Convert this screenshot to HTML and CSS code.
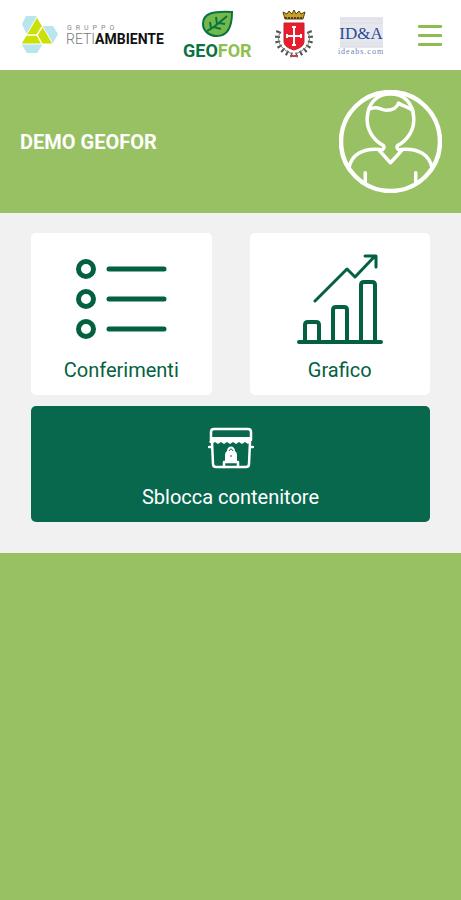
FILE: index.html
```html
<!DOCTYPE html>
<html lang="it">
<head>
  <meta charset="UTF-8" />
  <meta name="viewport" content="width=device-width, initial-scale=1.0"/>
  <title>Geofor</title>
  <link rel="stylesheet" href="styles.css">
</head>
<body>
  <header class="topbar">
    <svg class="logo-reti" viewBox="0 0 142 50" role="img" aria-label="Gruppo Retiambiente">
      <g fill="#b9e5ec">
        <path d="M6 6h10l5 8-5 9H6l-4-9z"/>
        <path d="M23 16h10l5 8-5 9H23l-5-9z"/>
        <path d="M7 27h10l5 8-5 8H7l-5-8z"/>
      </g>
      <path d="M17 7l16 27H1z" fill="#cbe004" stroke="#fff"/>
      <path d="M5 25h12l5 9M17 25l5-8" fill="none" stroke="#fff" stroke-width="1.5"/>
      <text class="gruppo" x="47" y="20">GRUPPO</text>
      <text class="reti" x="46" y="34">RETI<tspan class="ambiente">AMBIENTE</tspan></text>
    </svg>
    <svg class="logo-geofor" viewBox="0 0 72 50" role="img" aria-label="Geofor">
      <path d="M50 2c0 15-4 24-15 24-8 0-14-5-14-12C21 3 31 1 50 2z" fill="#75b84a" stroke="#087443" stroke-width="2"/>
      <path d="M25 21C32 18 38 12 45 6M29 18l-1-6M35 14l-1-7M32 17l7 2M37 13l6 1" fill="none" stroke="#087443" stroke-width="2"/>
      <text class="geo" x="1" y="47">GEO<tspan class="for">FOR</tspan></text>
    </svg>
    <svg class="logo-crest" viewBox="0 0 40 50" role="img" aria-label="Stemma del comune">
      <path d="M11 9L9 2l4 2 2-3 3 3 2-4 2 4 3-3 2 3 4-2-2 7z" fill="#c99f25" stroke="#514016"/>
      <path d="M11 8h18" stroke="#514016" stroke-width="2" stroke-dasharray="2 1"/>
      <path d="M5 21c-5 13 3 21 13 24M35 21c5 13-3 21-13 24" fill="none" stroke="#4b5a50" stroke-width="5" stroke-dasharray="2 3"/>
      <path d="M6 22c-5 12 4 19 13 22M34 22c5 12-4 19-13 22" fill="none" stroke="#777" stroke-width="1"/>
      <path d="M10 13h20v18c0 5-4 7-10 9-6-2-10-4-10-9z" fill="#e81e2d" stroke="#c3202b"/>
      <path d="M20 18v17M13 26h14M18 17h4M18 35h4M13 24v4M27 24v4" fill="none" stroke="#fff" stroke-width="2"/>
      <path d="M16 46h8" stroke="#b54a4a" stroke-width="2"/>
    </svg>
    <svg class="logo-ida" viewBox="0 0 54 50" role="img" aria-label="ID&amp;A ideabs.com">
      <path d="M6 7h43v31H6z" fill="#e6e7ec"/>
      <path d="M6 9h43M6 13h43M6 33h43M6 36h43" stroke="#dcdde6"/>
      <text class="ida" x="27" y="29" text-anchor="middle">ID&amp;A</text>
      <text class="ida-url" x="27" y="44" text-anchor="middle">ideabs.com</text>
    </svg>
    <button class="menu-btn" type="button" aria-label="Menu">
      <span></span>
      <span></span>
      <span></span>
    </button>
  </header>

  <section class="profile">
    <h1>DEMO GEOFOR</h1>
    <svg class="avatar" viewBox="0 0 102 102" aria-hidden="true">
      <g fill="none" stroke="#fff" stroke-width="3.5" stroke-linecap="round" stroke-linejoin="round">
        <circle cx="51" cy="51" r="49" stroke-width="4.5"/>
        <path d="M41 60q5-2 3-5C33 49 27 38 28 27 29 12 38 4 51 4s22 8 23 23c1 11-5 22-16 28q-2 3 3 5"/>
        <path d="M40 60l11 12 11-12"/>
        <path d="M30 19c8-4 11 1 17 1 7 0 10-2 12-7 4 3 8 3 14 7"/>
        <path d="M41 59C23 57 12 65 10 77M61 59c18-2 29 6 31 18"/>
        <path d="M26 82v11M76 82v11"/>
      </g>
    </svg>
  </section>

  <!-- Main actions -->
  <main class="actions">
    <button class="card" type="button">
      <svg class="card-icon" viewBox="0 0 92 92" aria-hidden="true">
        <g fill="none" stroke="#04613f" stroke-width="5" stroke-linecap="round">
          <circle cx="11" cy="16" r="7.5"/>
          <circle cx="11" cy="46" r="7.5"/>
          <circle cx="11" cy="76" r="7.5"/>
          <path d="M34 16h55M34 46h55M34 76h55"/>
        </g>
      </svg>
      <span>Conferimenti</span>
    </button>
    <button class="card" type="button">
      <svg class="card-icon" viewBox="0 0 92 92" aria-hidden="true">
        <g fill="none" stroke="#04613f" stroke-width="4" stroke-linecap="round" stroke-linejoin="round">
          <path d="M5 89h82"/>
          <path d="M11 88V72q0-3 3-3h8q3 0 3 3v16"/>
          <path d="M39 88V57q0-3 3-3h8q3 0 3 3v31"/>
          <path d="M67 88V32q0-3 3-3h8q3 0 3 3v56"/>
          <path d="M21 48L53 16l8 8L81 3M71 3h11v11" stroke-width="3"/>
        </g>
      </svg>
      <span>Grafico</span>
    </button>
    <button class="card card-wide" type="button">
      <svg class="bin-icon" viewBox="0 0 46 42" aria-hidden="true">
        <g fill="none" stroke="#fff" stroke-width="2.5" stroke-linecap="round" stroke-linejoin="round">
          <path d="M3 13V5q0-3 3-3h34q3 0 3 3v8z" />
          <path d="M4 15l1 22q0 3 3 3h30q3 0 3-3l1-22M1 20h3M42 20h3"/>
          <path d="M16 40v-5h14v5"/>
        </g>
        <path d="M4 10h38v5l-2 2-3-2-3 2-3-2-3 2-3-2-3 2-3-2-3 2-3-2-3 2-3-2-3 2-3-2z" fill="#fff"/>
        <path d="M17 34v-6q0-3 2-4c0-6 8-6 8 0q2 1 2 4v6z" fill="#fff"/>
        <path d="M21 24q2-4 4 0M23 28v2" fill="none" stroke="#08684e"/>
      </svg>
      <span>Sblocca contenitore</span>
    </button>
  </main>
</body>
</html>
```
FILE: styles.css
```css
/* ===== Base Styles ===== */
* {
  margin: 0;
  padding: 0;
  box-sizing: border-box;
}
body {
  min-height: 100vh;
  background-color: #97c162;
  font-family: Roboto, sans-serif;
}
button {
  border: none;
  font-family: inherit;
  cursor: pointer;
}

/* ===== Top Bar ===== */
.topbar {
  display: flex;
  align-items: center;
  gap: 20px;
  height: 70px;
  padding: 0 19px 0 20px;
  background-color: #fff;
}
.topbar svg {
  flex: none;
  height: 50px;
  overflow: visible;
}
.logo-reti {
  width: 142px;
}
.logo-geofor {
  width: 72px;
}
.logo-crest {
  width: 40px;
}
.logo-ida {
  width: 54px;
}
.gruppo {
  font-size: 7px;
  letter-spacing: 4px;
  fill: #888;
}
.reti {
  font-size: 14px;
  font-weight: 300;
  fill: #777;
}
.ambiente {
  font-weight: 700;
  fill: #111;
}
.geo {
  font-size: 18px;
  font-weight: 700;
  fill: #087443;
}
.for {
  fill: #8fc04f;
}
.ida {
  font-family: "Liberation Serif", serif;
  font-size: 17px;
  fill: #2c4a9a;
}
.ida-url {
  font-family: "Liberation Serif", serif;
  font-size: 8px;
  letter-spacing: 1px;
  fill: #7080bb;
}
.menu-btn {
  display: flex;
  flex-direction: column;
  gap: 6px;
  width: 24px;
  margin-left: auto;
  background: none;
}
.menu-btn span {
  height: 3px;
  border-radius: 1px;
  background-color: #8dbd50;
}

/* ===== Profile ===== */
.profile {
  display: flex;
  align-items: center;
  justify-content: space-between;
  padding: 20px 19px 20px 20px;
}
.profile h1 {
  font-size: 20px;
  font-weight: 700;
  color: #fff;
}
.avatar {
  width: 103px;
  height: 103px;
}

/* ===== Actions ===== */
.actions {
  display: grid;
  grid-template-columns: 1fr 1fr;
  gap: 11px 38px;
  padding: 20px 31px 31px;
  background-color: #f1f1f1;
}
.card {
  display: flex;
  flex-direction: column;
  align-items: center;
  gap: 13px;
  padding: 20px 10px 13px;
  border-radius: 5px;
  background-color: #fff;
  color: #04613f;
  font-size: 20px;
  line-height: 24px;
}
.card-icon {
  width: 92px;
  height: 92px;
}
.card-wide {
  grid-column: 1 / -1;
  gap: 16px;
  padding: 21px 10px 13px;
  background-color: #08684e;
  color: #fff;
}
.bin-icon {
  width: 46px;
  height: 42px;
}
```
